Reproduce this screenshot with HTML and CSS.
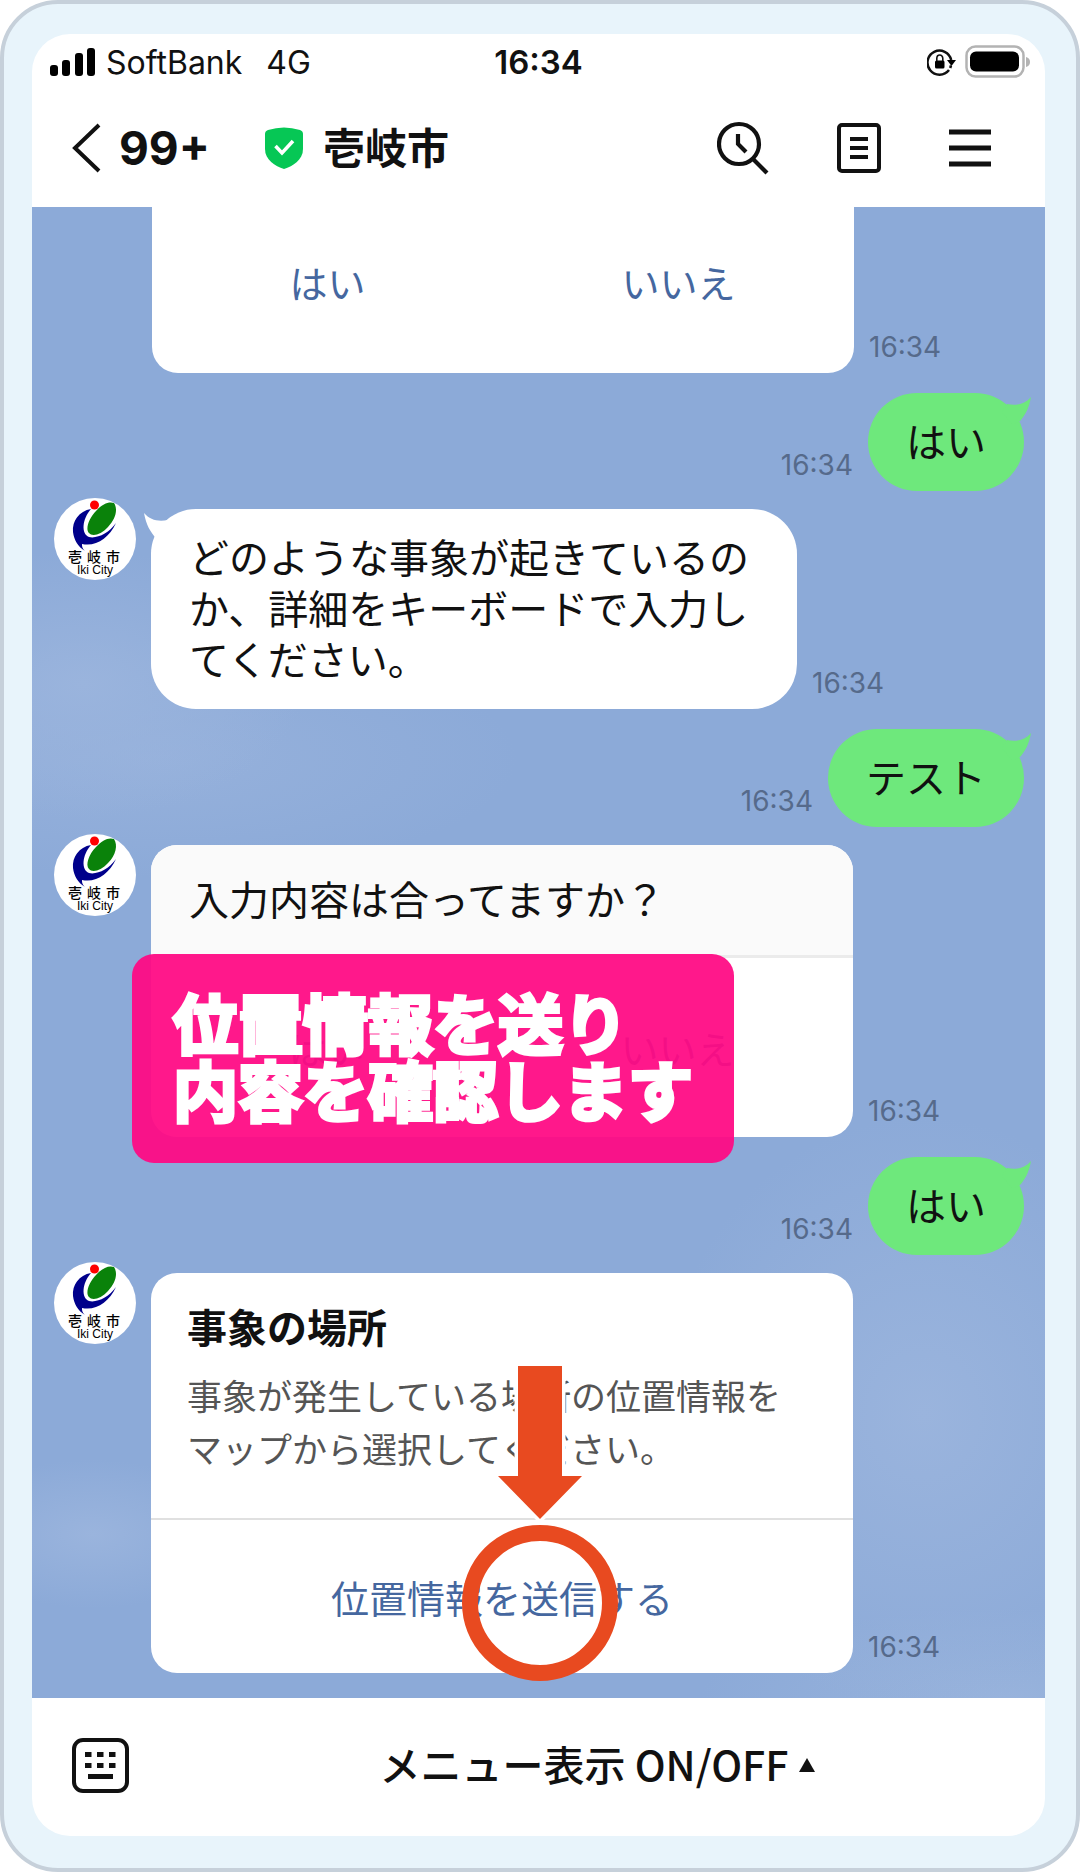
FILE: index.html
```html
<!DOCTYPE html>
<html lang="ja">
<head>
<meta charset="utf-8">
<meta name="viewport" content="width=device-width, initial-scale=1">
<title>壱岐市</title>
<link rel="stylesheet" href="styles.css">
</head>
<body>
<svg class="defs" aria-hidden="true">
  <symbol id="city" viewBox="0 0 82 82">
    <circle cx="41" cy="41" r="41" fill="#fff"/>
    <path d="M37 11C25 13 18 23 19 34C20 42 24 49 31 53C28 50 28 48 28 46C42 49 55 40 62 25C55 35 43 41 35 39C27 36 28 21 37 11Z" fill="#00008b"/>
    <path d="M60 5C64 11 62 21 54 29C47 37 38 39 35 35C31 31 35 20 42 13C48 6 55 3 60 5Z" fill="#0a820a"/>
    <circle cx="40.500" cy="7" r="4.500" fill="#f00"/>
    <text x="14" y="64" class="seal-name">壱</text>
    <text x="33" y="64" class="seal-name">岐</text>
    <text x="52" y="64" class="seal-name">市</text>
    <text x="41" y="76" class="seal-latin" text-anchor="middle">Iki City</text>
  </symbol>
  <symbol id="tail" viewBox="0 0 30 28">
    <path d="M1 1C7 8 15 10 25 8L30 16L20 28L13 26C7 20 3 12 1 1Z" fill="currentColor"/>
  </symbol>
</svg>
<main class="frame">
  <div class="screen">
    <div class="status">
      <div class="carrier">
        <svg width="46" height="30" viewBox="0 0 46 30" aria-hidden="true"><rect x="0" y="18" width="8" height="11" rx="3"/><rect x="12" y="13" width="8" height="16" rx="3"/><rect x="25" y="6" width="8" height="23" rx="3"/><rect x="37" y="1" width="8" height="28" rx="3"/></svg>
        <span>SoftBank</span><span class="network">4G</span>
      </div>
      <time class="clock">16:34</time>
      <div class="power">
        <svg width="30" height="28" viewBox="0 0 30 28" aria-hidden="true"><path d="M24.200 12A12 12 0 1 0 22 22M24 17.500L23.200 20" fill="none" stroke="#111" stroke-width="2.500"/><path d="M20 12H29L24.500 18Z"/><rect x="8" y="12.500" width="9.500" height="8" rx="1.500"/><path d="M9.800 13V10.500A3 3.500 0 0 1 15.800 10.500V13" fill="none" stroke="#111" stroke-width="1.600"/></svg>
        <svg width="66" height="34" viewBox="0 0 66 34" aria-hidden="true"><rect x="1.500" y="1.500" width="57" height="30" rx="9" fill="none" stroke="#b3b3b3" stroke-width="2.500"/><rect x="5" y="6.500" width="49" height="20" rx="6"/><path d="M61 12Q65 13 65 17Q65 21 61 22Z" fill="#b3b3b3"/></svg>
      </div>
    </div>
    <header class="top">
      <button class="back" type="button">
        <svg width="30" height="50" viewBox="0 0 30 50" aria-hidden="true"><path d="M27 2L3 25L27 48" fill="none" stroke="#111" stroke-width="4"/></svg>
        <span>99+</span>
      </button>
      <h1 class="name">
        <svg width="38" height="42" viewBox="0 0 38 42" aria-hidden="true"><path d="M0 7Q0 4 3 3Q19 -2 35 3Q38 4 38 7V22C38 33 28 39 19 42C10 39 0 33 0 22Z" fill="#06c755"/><path d="M10.500 19L17 26L28 14" fill="none" stroke="#fff" stroke-width="3.500"/></svg>
        <span>壱岐市</span>
      </h1>
      <nav class="tools">
        <button type="button" aria-label="検索"><svg width="52" height="54" viewBox="0 0 52 54" aria-hidden="true"><g fill="none" stroke="#111" stroke-width="4.200"><circle cx="22" cy="23" r="20"/><path d="M21 13V23L29 31M36 38L50 52"/></g></svg></button>
        <button type="button" aria-label="ノート"><svg width="44" height="50" viewBox="0 0 44 50" aria-hidden="true"><g fill="none" stroke="#111" stroke-width="4"><rect x="2" y="2" width="40" height="46" rx="3"/><path d="M13 16H31M13 25H31M13 34H31"/></g></svg></button>
        <button type="button" aria-label="メニュー"><svg width="42" height="40" viewBox="0 0 42 40" aria-hidden="true"><path d="M0 4H42M0 20H42M0 36H42" stroke="#111" stroke-width="5"/></svg></button>
      </nav>
    </header>

    <section class="chat">
      <div class="row bot first">
        <div class="card"><div class="choices clipped"><button type="button">はい</button><button type="button">いいえ</button></div></div>
        <time class="stamp">16:34</time>
      </div>
      <div class="row me">
        <time class="stamp">16:34</time>
        <p class="bubble">はい<svg class="tail" aria-hidden="true"><use href="#tail"/></svg></p>
      </div>
      <div class="row bot">
        <svg class="avatar" role="img" aria-label="壱岐市"><use href="#city"/></svg>
        <p class="bubble">どのような事象が起きているのか、詳細をキーボードで入力してください。<svg class="tail" aria-hidden="true"><use href="#tail"/></svg></p>
        <time class="stamp">16:34</time>
      </div>
      <div class="row me">
        <time class="stamp">16:34</time>
        <p class="bubble">テスト<svg class="tail" aria-hidden="true"><use href="#tail"/></svg></p>
      </div>
      <div class="row bot">
        <svg class="avatar" role="img" aria-label="壱岐市"><use href="#city"/></svg>
        <div class="card">
          <p class="question">入力内容は合ってますか？</p>
          <div class="choices"><button type="button">はい</button><button type="button">いいえ</button></div>
          <p class="callout">位置情報を送り<br>内容を確認します</p>
        </div>
        <time class="stamp">16:34</time>
      </div>
      <div class="row me">
        <time class="stamp">16:34</time>
        <p class="bubble">はい<svg class="tail" aria-hidden="true"><use href="#tail"/></svg></p>
      </div>
      <div class="row bot">
        <svg class="avatar" role="img" aria-label="壱岐市"><use href="#city"/></svg>
        <div class="card">
          <div class="place">
            <h2>事象の場所</h2>
            <p>事象が発生している場所の位置情報をマップから選択してください。</p>
          </div>
          <button class="send" type="button">位置情報を送信する</button>
          <svg class="pointer" width="164" height="324" viewBox="0 0 164 324" aria-hidden="true"><path d="M60 4H104V114H124L82 157L40 114H60Z" fill="#e84a20" stroke="#fff" stroke-width="7" paint-order="stroke"/><circle cx="82" cy="241" r="70" fill="none" stroke="#e84a20" stroke-width="16"/></svg>
        </div>
        <time class="stamp">16:34</time>
      </div>
    </section>

    <footer class="bottom">
      <button type="button" aria-label="キーボード"><svg width="57" height="55" viewBox="0 0 57 55" aria-hidden="true"><rect x="2" y="2" width="53" height="51" rx="9" fill="none" stroke="#111" stroke-width="4"/><path d="M13 16.500H44M13 27.500H44" stroke="#111" stroke-width="5" stroke-dasharray="6.500 5.500"/><path d="M16 38.500H41" stroke="#111" stroke-width="5"/></svg></button>
      <button class="menu" type="button"><span>メニュー表示 ON/OFF</span><svg width="16" height="14" viewBox="0 0 16 14" aria-hidden="true"><path d="M0 14L8 0L16 14Z" fill="#111"/></svg></button>
    </footer>
  </div>
</main>
</body>
</html>
```
FILE: styles.css
```css
* { box-sizing: border-box; }

body {
  margin: 0;
  background: #fff;
  color: #111;
  font-family: "Noto Sans CJK JP", sans-serif;
}

h1, h2, p { margin: 0; }

button {
  margin: 0;
  padding: 0;
  border: 0;
  background: none;
  color: inherit;
  font: inherit;
  cursor: pointer;
}

svg { display: block; flex: none; }

.defs { display: none; }

.frame {
  padding: 30px 31px 32px 28px;
  border: 4px solid #c6d0da;
  border-radius: 58px;
  background: #e8f4fb;
}

.screen {
  border-radius: 38px;
  background: #fff;
  overflow: hidden;
}

/* Status bar */
.status {
  display: grid;
  grid-template-columns: 1fr auto 1fr;
  align-items: center;
  height: 56px;
  padding: 0 14px 0 18px;
  font-family: Inter, sans-serif;
  font-size: 32px;
}

.carrier { display: flex; align-items: center; gap: 10px; }
.network { margin-left: 14px; }
.clock { padding-right: 4px; font-size: 33px; font-weight: 600; }
.power { display: flex; align-items: center; justify-content: flex-end; gap: 8px; }

/* Chat header */
.top {
  display: flex;
  align-items: center;
  height: 117px;
  padding: 0 54px 2px 40px;
}

.back {
  display: flex;
  align-items: center;
  gap: 17px;
  font-family: Inter, sans-serif;
  font-size: 46px;
  font-weight: 700;
}

.name {
  display: flex;
  align-items: center;
  gap: 20px;
  margin-left: 55px;
  font-size: 42px;
  font-weight: 700;
}

.name span { padding-bottom: 4px; }

.tools {
  display: flex;
  align-items: center;
  gap: 68px;
  margin-left: auto;
}

/* Messages */
.chat {
  display: flex;
  flex-direction: column;
  padding: 0 21px 25px 22px;
  background:
    radial-gradient(ellipse 22% 9% at 5% 32%, #9ab4dd, transparent),
    radial-gradient(ellipse 36% 8% at 12% 37%, rgba(154, 180, 221, 0.7), transparent),
    radial-gradient(ellipse 14% 5% at 6% 89%, #9ab4dd, transparent),
    radial-gradient(ellipse 26% 20% at 88% 81%, #9ab4dd, transparent),
    radial-gradient(ellipse 30% 6% at 96% 100%, #98b3dc, transparent),
    #8caad8;
}

.row { display: flex; align-items: flex-end; gap: 15px; }
.row.me { justify-content: flex-end; margin-top: 20px; }
.row.bot { margin-top: 7px; }
.row.first { margin-top: 0; padding-left: 98px; }

.avatar {
  width: 82px;
  height: 82px;
  align-self: flex-start;
}

.seal-name { font-size: 14px; font-weight: 500; }
.seal-latin { font-family: "Liberation Sans", sans-serif; font-size: 12px; }

.stamp {
  margin-bottom: 10px;
  color: #566a8b;
  font-family: Inter, sans-serif;
  font-size: 28px;
  line-height: 32px;
}

.bubble {
  position: relative;
  padding: 22px 38px 25px;
  border-radius: 49px;
  font-size: 40px;
  line-height: 51px;
}

.me .bubble { background: #6ee87c; }
.bot .bubble { flex: 0 1 646px; margin-top: 11px; border-radius: 45px; background: #fff; }

.tail { position: absolute; width: 30px; height: 28px; }
.me .tail { top: 3px; right: -8px; color: #6ee87c; transform: scaleX(-1); }
.bot .tail { top: 3px; left: -8px; color: #fff; }

.card {
  position: relative;
  flex: 0 1 702px;
  margin-top: 11px;
  border-radius: 26px;
  background: #fff;
}

.first .card { margin-top: 0; border-radius: 0 0 26px 26px; }

.question {
  padding: 28px 38px 31px;
  border-bottom: 3px solid #ebebeb;
  border-radius: 26px 26px 0 0;
  background: #fafafa;
  font-size: 40px;
  line-height: 51px;
}

.choices {
  display: grid;
  grid-template-columns: 1fr 1fr;
  height: 179px;
  color: #45679f;
  font-size: 38px;
}

.clipped { height: 166px; padding-bottom: 18px; }

.callout {
  position: absolute;
  top: 109px;
  left: -19px;
  padding: 34px 41px 41px;
  border-radius: 22px;
  background: rgba(255, 10, 132, 0.94);
  color: #fff;
  font-size: 65px;
  font-weight: 700;
  line-height: 67px;
  white-space: nowrap;
  -webkit-text-stroke: 4px #fff;
}

.place {
  padding: 28px 60px 44px 36px;
  border-bottom: 2px solid #e0e0e0;
}

.place h2 { font-size: 40px; font-weight: 700; line-height: 50px; }
.place p { margin-top: 17px; color: #555; font-size: 35px; line-height: 53px; }

.send {
  width: 100%;
  height: 153px;
  color: #45679f;
  font-size: 38px;
}

.pointer { position: absolute; top: 89px; left: 307px; pointer-events: none; }

/* Footer */
.bottom {
  display: flex;
  align-items: center;
  gap: 20px;
  height: 138px;
  padding: 0 0 4px 40px;
}

.menu {
  display: flex;
  flex: 1;
  align-items: center;
  justify-content: center;
  gap: 10px;
  font-size: 41px;
  font-weight: 500;
}

.menu span { padding-bottom: 4px; }
```
